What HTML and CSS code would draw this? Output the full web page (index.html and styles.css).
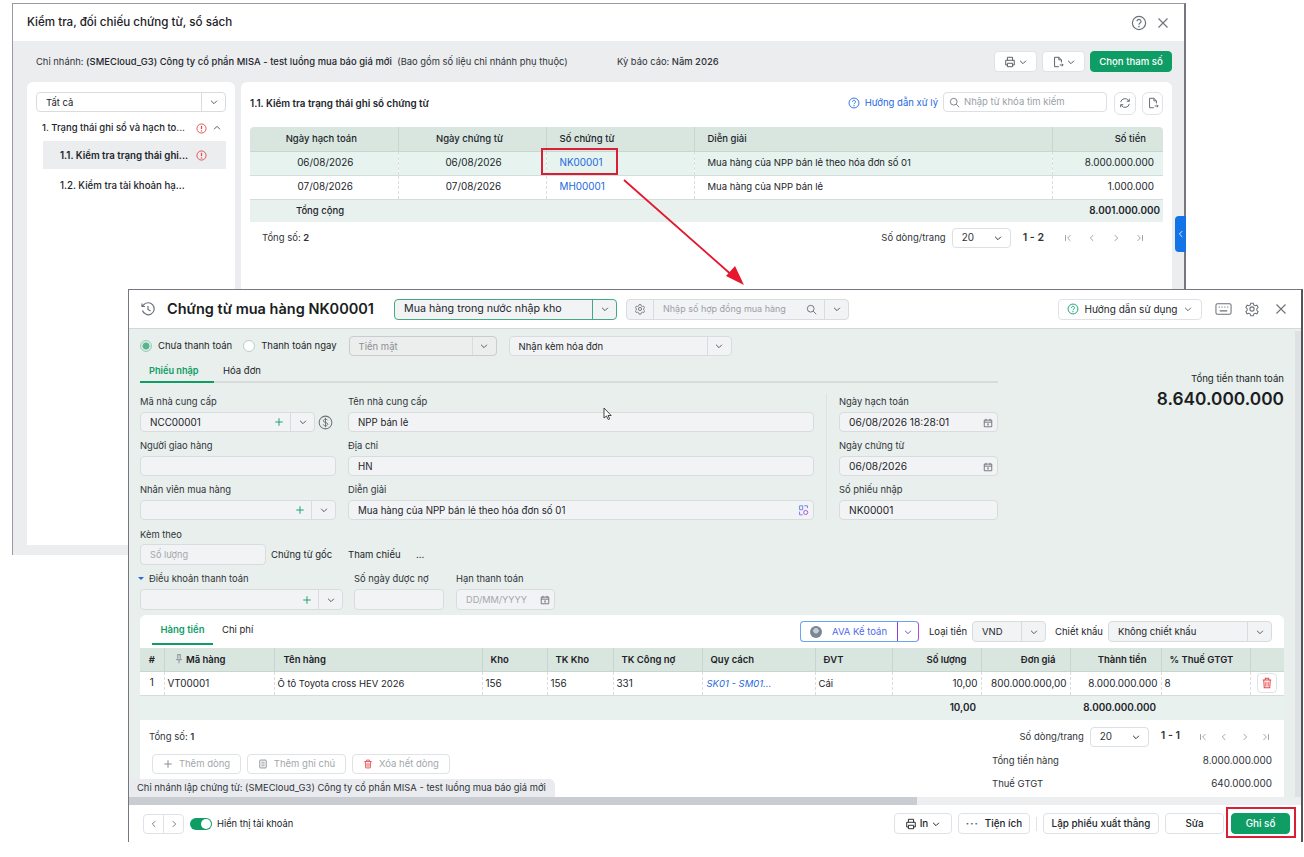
FILE: index.html
```html
<!DOCTYPE html>
<html lang="vi">
<head>
<meta charset="utf-8">
<title>Chứng từ mua hàng</title>
<link rel="stylesheet" href="styles.css">
</head>
<body>
<svg class="sprite" width="0" height="0">
  <symbol id="chev" viewBox="0 0 12 12"><path d="M2.500 4.500 6 8l3.500-3.500" fill="none" stroke="currentColor" stroke-width="1.200"/></symbol>
  <symbol id="help" viewBox="0 0 16 16"><circle cx="8" cy="8" r="6.600" fill="none" stroke="currentColor" stroke-width="1.200"/><path d="M6 6.300a2 2 0 1 1 3 1.800c-.7.4-1 .8-1 1.600" fill="none" stroke="currentColor" stroke-width="1.200"/><circle cx="8" cy="11.600" r=".8" fill="currentColor"/></symbol>
  <symbol id="close" viewBox="0 0 12 12"><path d="M1.500 1.500l9 9m0-9-9 9" fill="none" stroke="currentColor" stroke-width="1.100"/></symbol>
  <symbol id="print" viewBox="0 0 14 14"><path d="M4 5V1.500h6V5M4 10.500H2V5h10v5.500h-2M4 8.500h6v4H4z" fill="none" stroke="currentColor" stroke-width="1.100"/></symbol>
  <symbol id="export" viewBox="0 0 14 14"><path d="M8 12.500H3v-11h5l3 3v3M8 1.500v3h3M9 10.500h4m-1.500-1.500 1.500 1.500-1.500 1.500" fill="none" stroke="currentColor" stroke-width="1.100"/></symbol>
  <symbol id="warn" viewBox="0 0 12 12"><circle cx="6" cy="6" r="5" fill="none" stroke="currentColor" stroke-width="1"/><path d="M6 3v3.600" stroke="currentColor" stroke-width="1.300"/><circle cx="6" cy="8.600" r=".8" fill="currentColor"/></symbol>
  <symbol id="search" viewBox="0 0 14 14"><circle cx="6" cy="6" r="4.300" fill="none" stroke="currentColor" stroke-width="1.100"/><path d="M9.200 9.200 13 13" stroke="currentColor" stroke-width="1.100"/></symbol>
  <symbol id="refresh" viewBox="0 0 14 14"><path d="M2 6a5 5 0 0 1 9-2l1 1M12 8a5 5 0 0 1-9 2L2 9M12 2v3H9M2 12V9h3" fill="none" stroke="currentColor" stroke-width="1.100"/></symbol>
  <symbol id="first" viewBox="0 0 12 12"><path d="M3 2.500v7M9 2.500 5.500 6 9 9.500" fill="none" stroke="currentColor" stroke-width="1"/></symbol>
  <symbol id="prev" viewBox="0 0 12 12"><path d="M7.500 2.500 4 6l3.500 3.500" fill="none" stroke="currentColor" stroke-width="1"/></symbol>
  <symbol id="next" viewBox="0 0 12 12"><path d="M4.500 2.500 8 6 4.500 9.500" fill="none" stroke="currentColor" stroke-width="1"/></symbol>
  <symbol id="last" viewBox="0 0 12 12"><path d="M9 2.500v7M3 2.500 6.500 6 3 9.500" fill="none" stroke="currentColor" stroke-width="1"/></symbol>
  <symbol id="up" viewBox="0 0 12 12"><path d="M2.500 7.500 6 4l3.500 3.500" fill="none" stroke="currentColor" stroke-width="1.200"/></symbol>
  <symbol id="history" viewBox="0 0 16 16"><path d="M2.500 9.500A6 6 0 1 0 3.400 4.200L2 5.500M2 2.500v3h3M8 5v3.500l2.500 1.500" fill="none" stroke="currentColor" stroke-width="1.200"/></symbol>
  <symbol id="gear" viewBox="0 0 16 16"><path d="M6.500 1.500h3l.5 2 1.800 1 2-.6 1.400 2.600-1.500 1.500v2l1.500 1.400-1.400 2.600-2-.6-1.800 1-.5 2h-3l-.5-2-1.800-1-2 .6L.8 11.400l1.500-1.400v-2L.8 6.500l1.400-2.600 2 .6 1.800-1z" transform="translate(1.200 .9) scale(.85)" fill="none" stroke="currentColor" stroke-width="1.200"/><circle cx="8" cy="8" r="2.100" fill="none" stroke="currentColor" stroke-width="1.100"/></symbol>
  <symbol id="keyboard" viewBox="0 0 18 14"><rect x="1" y="1.500" width="16" height="11" rx="1.500" fill="none" stroke="currentColor" stroke-width="1.100"/><path d="M4 5h1m2 0h1m2 0h1m2 0h1M5 9h8" stroke="currentColor" stroke-width="1.100"/></symbol>
  <symbol id="plus" viewBox="0 0 12 12"><path d="M6 1.500v9m-4.500-4.500h9" stroke="currentColor" stroke-width="1.100" fill="none"/></symbol>
  <symbol id="dollar" viewBox="0 0 16 16"><circle cx="8" cy="8" r="6.800" fill="none" stroke="currentColor" stroke-width="1.100"/><path d="M10.300 5.700C10 4.800 9 4.500 8 4.500c-1.300 0-2.300.6-2.300 1.700 0 2.400 4.700 1.200 4.700 3.600 0 1.100-1 1.700-2.400 1.700-1.200 0-2.200-.4-2.500-1.400M8 3v10" fill="none" stroke="currentColor" stroke-width="1"/></symbol>
  <symbol id="cal" viewBox="0 0 12 12"><path d="M1.500 2.500h9v8h-9zM1.500 5h9M3.500 1v2.500M8.500 1v2.500" fill="none" stroke="currentColor" stroke-width="1.100"/><rect x="5.300" y="6.500" width="1.500" height="2.500" fill="currentColor"/></symbol>
  <symbol id="trash" viewBox="0 0 12 14"><path d="M1 3.500h10M4 3.500V1.500h4v2M2.200 3.500l.6 9h6.400l.6-9M4.700 5.500v5.500M7.300 5.500v5.500" fill="none" stroke="currentColor" stroke-width="1.200"/></symbol>
  <symbol id="note" viewBox="0 0 12 14"><rect x="1.500" y="1.500" width="9" height="11" rx="1" fill="none" stroke="currentColor" stroke-width="1.200"/><path d="M3.700 4.500h4.600M3.700 7h4.600M3.700 9.500h4.600" stroke="currentColor" stroke-width="1"/></symbol>
  <symbol id="pin" viewBox="0 0 10 14"><path d="M2.500 1h5M3.300 1v5L1.500 8h7L6.700 6V1M5 8v5" fill="none" stroke="currentColor" stroke-width="1"/></symbol>
  <symbol id="ai" viewBox="0 0 12 14"><path d="M5 1H1v5h4zM1 8.500v4h4M7 1h4v3" fill="none" stroke="#5b7be8" stroke-width="1.100"/><circle cx="8.800" cy="9.500" r="2.600" fill="none" stroke="#b04be0" stroke-width="1.200"/></symbol>
</svg>

<section class="window win-back">
  <header class="back-head">
    <h1 class="back-title">Kiểm tra, đối chiếu chứng từ, sổ sách</h1>
    <span class="head-icons">
      <svg class="ic16 c-grey"><use href="#help"/></svg>
      <svg class="ic12 c-grey"><use href="#close"/></svg>
    </span>
  </header>
  <div class="back-body">
    <div class="info-bar">
      <p class="info-branch">Chi nhánh: <b>(SMECloud_G3) Công ty cổ phần MISA - test luồng mua báo giá mới</b>&nbsp; (Bao gồm số liệu chi nhánh phụ thuộc)</p>
      <p class="info-period">Kỳ báo cáo: <b>Năm 2026</b></p>
      <span class="info-actions">
        <button class="btn btn-icon-drop"><svg class="ic12"><use href="#print"/></svg><svg class="ic10"><use href="#chev"/></svg></button>
        <button class="btn btn-icon-drop"><svg class="ic12"><use href="#export"/></svg><svg class="ic10"><use href="#chev"/></svg></button>
        <button class="btn btn-green btn-param">Chọn tham số</button>
      </span>
    </div>
    <div class="back-cols">
      <aside class="tree-card">
        <div class="combo tree-select"><span class="combo-text">Tất cả</span><span class="combo-drop"><svg class="ic10"><use href="#chev"/></svg></span></div>
        <div class="tree-row tree-l1"><span class="tree-label">1. Trạng thái ghi sổ và hạch to...</span><svg class="ic11 c-red"><use href="#warn"/></svg><svg class="ic10 tree-up"><use href="#up"/></svg></div>
        <div class="tree-row tree-l2 tree-active"><span class="tree-label">1.1. Kiểm tra trạng thái ghi...</span><svg class="ic11 c-red"><use href="#warn"/></svg></div>
        <div class="tree-row tree-l2 tree-last"><span class="tree-label">1.2. Kiểm tra tài khoản hạ...</span></div>
      </aside>
      <main class="report-card">
        <div class="report-head">
          <h2 class="report-title">1.1. Kiểm tra trạng thái ghi sổ chứng từ</h2>
          <a class="guide-link"><svg class="ic12"><use href="#help"/></svg>Hướng dẫn xử lý</a>
          <div class="search-box"><svg class="ic11 c-grey"><use href="#search"/></svg><span>Nhập từ khóa tìm kiếm</span></div>
          <button class="btn btn-square"><svg class="ic12"><use href="#refresh"/></svg></button>
          <button class="btn btn-square"><svg class="ic12"><use href="#export"/></svg></button>
        </div>
        <table class="grid grid-back">
          <colgroup><col class="b1"><col class="b1"><col class="b1"><col class="b2"><col class="b3"></colgroup>
          <thead><tr><th class="tc">Ngày hạch toán</th><th class="tc">Ngày chứng từ</th><th>Số chứng từ</th><th>Diễn giải</th><th class="tr th-money">Số tiền</th></tr></thead>
          <tbody>
            <tr class="row-sel"><td class="tc num">06/08/2026</td><td class="tc num">06/08/2026</td><td class="num"><a class="link">NK00001</a></td><td>Mua hàng của NPP bán lẻ theo hóa đơn số 01</td><td class="tr num">8.000.000.000</td></tr>
            <tr><td class="tc num">07/08/2026</td><td class="tc num">07/08/2026</td><td class="num"><a class="link">MH00001</a></td><td>Mua hàng của NPP bán lẻ</td><td class="tr num">1.000.000</td></tr>
          </tbody>
          <tfoot><tr><td class="tc total-label">Tổng cộng</td><td></td><td></td><td></td><td class="tr total-money num">8.001.000.000</td></tr></tfoot>
        </table>
        <div class="pager pager-back">
          <span class="count">Tổng số: <b>2</b></span>
          <span class="pager-right">
            <span>Số dòng/trang</span>
            <span class="page-size"><span>20</span><svg class="ic10"><use href="#chev"/></svg></span>
            <b class="page-range">1 - 2</b>
            <span class="page-nav"><svg class="ic10"><use href="#first"/></svg><svg class="ic10"><use href="#prev"/></svg><svg class="ic10"><use href="#next"/></svg><svg class="ic10"><use href="#last"/></svg></span>
          </span>
        </div>
      </main>
    </div>
  </div>
  <span class="side-tab"><svg class="ic10"><use href="#prev"/></svg></span>
</section>

<svg class="arrow" width="140" height="120" viewBox="0 0 140 120"><path d="M2 1 112 98" stroke="#e5162d" stroke-width="1.800" fill="none"/><path d="M122 106 104 97 113 87z" fill="#e5162d"/></svg>

<section class="window win-front">
  <header class="front-head">
    <svg class="ic16 c-grey hist"><use href="#history"/></svg>
    <h1 class="front-title">Chứng từ mua hàng NK00001</h1>
    <div class="combo combo-green"><span class="combo-text">Mua hàng trong nước nhập kho</span><span class="combo-drop"><svg class="ic10"><use href="#chev"/></svg></span></div>
    <div class="combo contract"><span class="contract-gear"><svg class="ic12"><use href="#gear"/></svg></span><span class="combo-text contract-text">Nhập số hợp đồng mua hàng</span><svg class="ic11 contract-search"><use href="#search"/></svg><span class="combo-drop"><svg class="ic10"><use href="#chev"/></svg></span></div>
    <span class="spacer"></span>
    <button class="btn guide-btn"><svg class="ic12 c-green"><use href="#help"/></svg><span>Hướng dẫn sử dụng</span><svg class="ic10"><use href="#chev"/></svg></button>
    <svg class="kbd c-grey"><use href="#keyboard"/></svg>
    <svg class="ic16 c-grey"><use href="#gear"/></svg>
    <svg class="ic12 c-grey"><use href="#close"/></svg>
  </header>

  <div class="front-body">
    <div class="upper">
      <div class="upper-left">
        <div class="pay-row">
          <label class="radio radio-on"><i></i>Chưa thanh toán</label>
          <label class="radio"><i></i>Thanh toán ngay</label>
          <div class="combo combo-dis cash"><span class="combo-text">Tiền mặt</span><span class="combo-drop"><svg class="ic10"><use href="#chev"/></svg></span></div>
          <div class="combo invoice"><span class="combo-text">Nhận kèm hóa đơn</span><span class="combo-drop"><svg class="ic10"><use href="#chev"/></svg></span></div>
        </div>
        <nav class="tabs form-tabs"><a class="tab tab-on">Phiếu nhập</a><a class="tab">Hóa đơn</a></nav>
        <div class="form-grid">
          <div class="fcol col-a">
            <div class="field"><span class="lbl">Mã nhà cung cấp</span>
              <div class="with-side"><div class="combo combo-ncc"><span class="combo-text num">NCC00001</span><svg class="ic10 c-green add"><use href="#plus"/></svg><span class="combo-drop"><svg class="ic10"><use href="#chev"/></svg></span></div><svg class="ic14 c-grey"><use href="#dollar"/></svg></div>
            </div>
            <div class="field"><span class="lbl">Người giao hàng</span><div class="input"></div></div>
            <div class="field"><span class="lbl">Nhân viên mua hàng</span><div class="combo"><span class="combo-text"></span><svg class="ic10 c-green add"><use href="#plus"/></svg><span class="combo-drop"><svg class="ic10"><use href="#chev"/></svg></span></div></div>
          </div>
          <div class="fcol col-b">
            <div class="field"><span class="lbl">Tên nhà cung cấp</span><div class="input">NPP bán lẻ</div></div>
            <div class="field"><span class="lbl">Địa chỉ</span><div class="input">HN</div></div>
            <div class="field"><span class="lbl">Diễn giải</span><div class="input input-between"><span>Mua hàng của NPP bán lẻ theo hóa đơn số 01</span><svg class="ic11"><use href="#ai"/></svg></div></div>
          </div>
          <div class="fcol col-c">
            <div class="field"><span class="lbl">Ngày hạch toán</span><div class="input input-between num"><span>06/08/2026 18:28:01</span><svg class="ic10 c-grey"><use href="#cal"/></svg></div></div>
            <div class="field"><span class="lbl">Ngày chứng từ</span><div class="input input-between num"><span>06/08/2026</span><svg class="ic10 c-grey"><use href="#cal"/></svg></div></div>
            <div class="field"><span class="lbl">Số phiếu nhập</span><div class="input num">NK00001</div></div>
          </div>
        </div>
        <div class="attach">
          <span class="lbl">Kèm theo</span>
          <div class="attach-row">
            <div class="input input-ph qty">Số lượng</div>
            <span class="attach-text">Chứng từ gốc</span>
            <span class="attach-ref">Tham chiếu</span>
            <span class="attach-dots">...</span>
          </div>
        </div>
        <div class="terms">
          <div class="field f-term"><span class="lbl"><i class="caret"></i>Điều khoản thanh toán</span><div class="combo"><span class="combo-text"></span><svg class="ic10 c-green add"><use href="#plus"/></svg><span class="combo-drop"><svg class="ic10"><use href="#chev"/></svg></span></div></div>
          <div class="field f-days"><span class="lbl">Số ngày được nợ</span><div class="input"></div></div>
          <div class="field f-due"><span class="lbl">Hạn thanh toán</span><div class="input input-between input-ph"><span>DD/MM/YYYY</span><svg class="ic10 c-grey"><use href="#cal"/></svg></div></div>
        </div>
      </div>
      <div class="upper-right">
        <div class="sum-label">Tổng tiền thanh toán</div>
        <div class="sum-value">8.640.000.000</div>
      </div>
    </div>

    <div class="items-card">
      <div class="items-bar">
        <nav class="tabs item-tabs"><a class="tab tab-on">Hàng tiền</a><a class="tab">Chi phí</a></nav>
        <span class="spacer"></span>
        <div class="ava"><span class="ava-main"><i class="ava-dot"></i><span>AVA Kế toán</span></span><span class="ava-drop"><svg class="ic10"><use href="#chev"/></svg></span></div>
        <span class="bar-label">Loại tiền</span>
        <div class="combo vnd"><span class="combo-text">VND</span><span class="combo-drop"><svg class="ic10"><use href="#chev"/></svg></span></div>
        <span class="bar-label">Chiết khấu</span>
        <div class="combo discount"><span class="combo-text">Không chiết khấu</span><span class="combo-drop"><svg class="ic10"><use href="#chev"/></svg></span></div>
      </div>
      <table class="grid grid-front">
        <colgroup><col class="f1"><col class="f2"><col class="f3"><col class="f4"><col class="f5"><col class="f6"><col class="f7"><col class="f8"><col class="f9"><col class="f9"><col class="f10"><col class="f9"><col class="f11"></colgroup>
        <thead><tr><th class="tc">#</th><th class="th-pin"><svg class="ic10 c-grey"><use href="#pin"/></svg> Mã hàng</th><th class="pl9">Tên hàng</th><th>Kho</th><th>TK Kho</th><th>TK Công nợ</th><th>Quy cách</th><th class="pl8">ĐVT</th><th class="tr th-r">Số lượng</th><th class="tr th-r">Đơn giá</th><th class="tr th-r">Thành tiền</th><th class="pl8">% Thuế GTGT</th><th></th></tr></thead>
        <tbody><tr><td class="tc num">1</td><td class="num">VT00001</td><td class="pl3">Ô tô Toyota cross HEV 2026</td><td class="num">156</td><td class="num">156</td><td class="num">331</td><td class="spec">SK01 - SM01...</td><td>Cái</td><td class="tr num">10,00</td><td class="tr num">800.000.000,00</td><td class="tr num">8.000.000.000</td><td class="num">8</td><td class="tc"><span class="del"><svg class="ic12 c-red"><use href="#trash"/></svg></span></td></tr></tbody>
        <tfoot><tr><td></td><td></td><td></td><td></td><td></td><td></td><td></td><td></td><td class="tr total-money num">10,00</td><td></td><td class="tr total-money num">8.000.000.000</td><td></td><td></td></tr></tfoot>
      </table>
      <div class="items-foot">
        <div class="foot-left">
          <span class="count">Tổng số: <b>1</b></span>
          <div class="row-btns">
            <button class="btn btn-dis w-add"><svg class="ic10"><use href="#plus"/></svg>Thêm dòng</button>
            <button class="btn btn-dis w-note"><svg class="ic10"><use href="#note"/></svg>Thêm ghi chú</button>
            <button class="btn btn-dis w-del"><svg class="ic10 c-red"><use href="#trash"/></svg>Xóa hết dòng</button>
          </div>
        </div>
        <div class="foot-right">
          <span class="pager-right">
            <span>Số dòng/trang</span>
            <span class="page-size"><span>20</span><svg class="ic10"><use href="#chev"/></svg></span>
            <b class="page-range">1 - 1</b>
            <span class="page-nav"><svg class="ic10"><use href="#first"/></svg><svg class="ic10"><use href="#prev"/></svg><svg class="ic10"><use href="#next"/></svg><svg class="ic10"><use href="#last"/></svg></span>
          </span>
          <div class="sum-line"><span>Tổng tiền hàng</span><span class="num">8.000.000.000</span></div>
          <div class="sum-line"><span>Thuế GTGT</span><span class="num">640.000.000</span></div>
        </div>
      </div>
    </div>
    <div class="branch-chip">Chi nhánh lập chứng từ: (SMECloud_G3) Công ty cổ phần MISA - test luồng mua báo giá mới</div>
    <div class="h-scroll"></div>
    <div class="v-scroll"></div>
  </div>

  <footer class="front-foot">
    <span class="nav-pair"><span><svg class="ic10"><use href="#prev"/></svg></span><span><svg class="ic10"><use href="#next"/></svg></span></span>
    <span class="toggle"><i></i></span>
    <span class="toggle-label">Hiển thị tài khoản</span>
    <span class="spacer"></span>
    <button class="btn foot-btn w-in"><svg class="ic12"><use href="#print"/></svg>In<svg class="ic10"><use href="#chev"/></svg></button>
    <button class="btn foot-btn w-util"><span class="dots">···</span>Tiện ích</button>
    <span class="foot-sep"></span>
    <button class="btn foot-btn w-lap">Lập phiếu xuất thẳng</button>
    <button class="btn foot-btn w-sua">Sửa</button>
    <button class="btn btn-green foot-btn w-ghi">Ghi số</button>
  </footer>
</section>

<span class="callout callout-link"></span>
<span class="callout callout-save"></span>
<svg class="cursor" width="10" height="14" viewBox="0 0 10 14"><path d="M1 1v10l2.500-2 1.700 3.500 1.500-.7L5 8.500h3.200z" fill="#fff" stroke="#333" stroke-width=".9"/></svg>
</body>
</html>
```
FILE: styles.css
```css
* { box-sizing: border-box; }
html, body { margin: 0; height: 857px; overflow: hidden; background: #fff; }
body { position: relative; font: 9.5px/1.2 Inter, "Liberation Sans", sans-serif; color: #22252b; }
h1, h2, p { margin: 0; }
b { font-weight: 600; }
i { font-style: normal; }
button { font: inherit; color: inherit; }
.sprite { position: absolute; }
svg { flex: none; display: block; }
.ic10 { width: 10px; height: 10px; }
.ic11 { width: 11px; height: 11px; }
.ic12 { width: 12px; height: 12px; }
.ic14 { width: 15px; height: 15px; }
.ic16 { width: 16px; height: 16px; }
.c-grey { color: #6c7178; }
.c-red { color: #e5484d; }
.c-green { color: #0f9d66; }
.spacer { flex: 1; }
.tc { text-align: center; }
.tr { text-align: right; }
.num { font-size: 9.9px; }

/* windows */
.window { position: absolute; background: #fff; display: flex; flex-direction: column; }
.win-back { left: 12px; top: 3px; width: 1174px; height: 552px; border: 1px solid #9a98a2; border-right: 2px solid #77767f; border-bottom: 0; }
.win-front { left: 128px; top: 289px; width: 1175px; height: 553px; border: 1px solid #77757f; border-right: 2px solid #55545c; border-bottom: 0; overflow: hidden; }

/* back window */
.back-head { height: 37px; flex: none; display: flex; align-items: center; padding: 0 15px 0 14px; }
.back-title { flex: 1; font-size: 11.6px; font-weight: 500; color: #1d2026; }
.head-icons { display: flex; align-items: center; gap: 10px; }
.back-body { flex: 1; background: #ebedef; display: flex; flex-direction: column; min-height: 0; }
.info-bar { height: 41px; flex: none; display: flex; align-items: center; padding: 0 12px 0 23px; font-size: 9.4px; }
.info-branch { width: 581px; color: #30343a; white-space: nowrap; }
.info-branch b { font-weight: 500; color: #22252b; letter-spacing: .05px; }
.info-period { flex: 1; color: #30343a; }
.info-period b { font-weight: 500; }
.info-actions { display: flex; gap: 5px; }
.btn { display: inline-flex; align-items: center; justify-content: center; border: 1px solid #dfe2e6; border-radius: 4px; background: #fff; padding: 0; height: 21px; }
.btn-icon-drop { width: 43px; gap: 2px; color: #555a61; }
.btn-green { background: #0f9d66; border-color: #0f9d66; color: #fff; font-weight: 500; }
.btn-param { width: 82px; font-size: 9.6px; }
.back-cols { flex: 1; display: flex; gap: 6px; padding: 0 12px 10px 14px; min-height: 0; }
.tree-card { width: 208px; flex: none; background: #fff; border-radius: 6px 6px 0 0; padding: 10px 9px 0; }
.tree-select { height: 20px; }
.tree-row { display: flex; align-items: center; height: 28px; font-weight: 500; white-space: nowrap; padding-top: 1px; }
.tree-l1 { margin-top: 2px; padding-left: 6px; height: 27px; }
.tree-l1 .tree-label { width: 154px; }
.tree-up { margin-left: 5px; color: #555a61; }
.tree-l2 { margin-left: 7px; padding-left: 17px; font-size: 9.7px; }
.tree-l2 .tree-label { width: 136px; }
.tree-active { background: #ebedef; height: 28px; font-weight: 600; }
.tree-last { margin-top: 1px; height: 30px; }
.report-card { flex: 1; min-width: 0; background: #fff; border-radius: 6px 6px 0 0; padding: 10px 9px 0; }
.report-head { display: flex; align-items: center; height: 22px; gap: 6px; }
.report-title { flex: 1; font-size: 9.8px; font-weight: 600; padding-top: 1px; }
.guide-link { display: flex; align-items: center; gap: 5px; color: #2469e0; margin-right: -1px; }
.search-box { width: 164px; height: 20px; margin: 0 1px 2px 0; border: 1px solid #dcdfe3; border-radius: 4px; display: flex; align-items: center; gap: 4px; padding: 0 5px; color: #9a9fa6; }
.btn-square { width: 22px; height: 23px; border-radius: 6px; color: #60656c; }
.btn-square:last-child { width: 21px; }

/* shared data grid */
.grid { width: 100%; border-collapse: collapse; table-layout: fixed; }
.grid th { background: #d9e6e0; font-weight: 600; text-align: left; height: 24px; padding: 0 8px; border-left: 1px solid #c6d5ce; border-bottom: 1px solid #c9d6d0; white-space: nowrap; }
.grid th:first-child { border-left: 0; }
.grid th.tc { text-align: center; }
.grid th.tr { text-align: right; }
.grid td { height: 24px; padding: 0 8px; border-left: 1px dashed #d9dde0; border-bottom: 1px solid #d6dbdd; white-space: nowrap; overflow: hidden; }
.grid td:first-child { border-left: 0; }
.grid tfoot td { background: #e9f1ee; border: 0; height: 23px; }
.total-money { font-weight: 600; }
.row-sel td { background: #e6f3ee; }
.link { color: #2469e0; }

.grid-back { margin-top: 13px; }
.grid-back th { font-weight: 500; padding: 0 13px; }
.grid-back th.tc { padding: 0 18px 0 13px; }
.grid-back td { padding: 0 13px; }
.grid-back td.tc { padding: 0 13px 0 16px; }
.grid-back td.tr { padding-right: 9px; }
.grid-back thead th:first-child { border-radius: 4px 0 0 0; }
.grid-back thead th:last-child { border-radius: 0 4px 0 0; }
.b1 { width: 148px; }
.b2 { width: 358px; }
.b3 { width: 111px; }
.th-money { padding-right: 17px !important; }
.grid-back td.total-label { font-weight: 500; padding: 0 8px 0 0; }
.grid-back tfoot .total-money { padding-right: 3px; }

.pager { display: flex; justify-content: space-between; align-items: center; }
.pager-back { height: 32px; padding: 0 18px 0 12px; }
.count { color: #30343a; }
.pager-right { display: inline-flex; align-items: center; color: #30343a; white-space: nowrap; }
.page-size { width: 59px; height: 20px; margin-left: 6px; border: 1px solid #dcdfe3; border-radius: 4px; display: inline-flex; align-items: center; justify-content: space-between; padding: 0 7px 0 9px; font-size: 9.9px; }
.page-range { margin-left: 12px; font-size: 10.6px; }
.page-nav { display: inline-flex; gap: 14px; margin-left: 19px; color: #8c9197; }
.side-tab { position: absolute; right: -2px; top: 212px; width: 11px; height: 36px; background: #1274e6; color: #fff; border-radius: 4px 0 0 4px; display: flex; align-items: center; justify-content: center; }

/* combos and inputs */
.combo { display: flex; align-items: center; height: 20px; border: 1px solid #d8dcdf; border-radius: 4px; background: #f2f3f4; }
.combo-text { flex: 1; padding: 1px 0 0 9px; white-space: nowrap; overflow: hidden; }
.combo-drop { width: 24px; height: 100%; border-left: 1px solid #d8dcdf; display: flex; align-items: center; justify-content: center; color: #555a61; }
.tree-select { background: #fff; }
.add { margin-right: 6px; }
.input { height: 20px; border: 1px solid #d8dcdf; border-radius: 4px; background: #f2f3f4; display: flex; align-items: center; padding: 1px 9px 0; font-size: 9.7px; }
.input.num { font-size: 10.2px; }
.input-between { justify-content: space-between; padding-right: 4px; }
.input-ph { color: #a3a7ac; font-size: 9.2px; }

/* front window */
.front-head { height: 39px; flex: none; display: flex; align-items: center; padding: 0 14px 0 11px; border-bottom: 1px solid #d4d8da; }
.front-head > .hist { margin-right: 11px; }
.front-title { width: 227px; font-size: 14.5px; font-weight: 600; color: #1a1d22; white-space: nowrap; }
.combo-green { width: 223px; border-color: #45a883; height: 21px; font-size: 10.7px; }
.combo-green .combo-drop { border-color: #45a883; }
.contract { width: 223px; height: 21px; margin-left: 9px; color: #9a9fa6; }
.contract-gear { width: 27px; height: 100%; display: flex; align-items: center; justify-content: center; border-right: 1px solid #d8dcdf; color: #60656c; }
.contract-text { font-size: 9px; }
.contract-search { margin-right: 7px; color: #60656c; }
.guide-btn { width: 144px; height: 21px; gap: 6px; margin-right: 13px; font-size: 10px; }
.guide-btn > .ic10 { color: #60656c; }
.kbd { width: 17px; height: 14px; margin-right: 12px; }
.front-head > .ic16 { margin-right: 15px; }
.front-head > .hist { margin-right: 11px; }
.front-body { flex: 1; position: relative; background: #e8efec; padding: 6px 17px 0 11px; min-height: 0; }
.upper { display: flex; }
.upper-left { width: 858px; flex: none; }
.upper-right { flex: 1; text-align: right; padding-top: 38px; }
.sum-label { font-size: 9.6px; }
.sum-value { margin-top: 4px; font-size: 17.3px; font-weight: 600; color: #1a1d22; }
.pay-row { display: flex; align-items: center; height: 21px; padding-top: 1px; }
.radio { display: inline-flex; align-items: center; gap: 6px; margin-right: 11px; white-space: nowrap; }
.radio i { width: 12px; height: 12px; border-radius: 50%; border: 1px solid #bcd0c8; background: #fff; display: block; }
.radio-on i { background: radial-gradient(circle, #58b48f 0 3.200px, #d7ebe2 3.800px); border-color: #9ccbb8; }
.cash { width: 148px; margin-left: 1px; }
.combo-dis { background: #eceded; color: #8a8f95; border-color: #c9ccd0; }
.invoice { width: 223px; margin-left: 12px; }
.tabs { display: flex; }
.tab { display: block; white-space: nowrap; }
.form-tabs { height: 27px; border-bottom: 2px solid #d7dcda; }
.form-tabs .tab { padding: 7px 9px 0; height: 27px; width: 74px; line-height: 15px; }
.form-tabs .tab-on { font-size: 9.2px; }
.form-tabs .tab + .tab { width: auto; }
.tab-on { color: #0f9d66; font-weight: 600; border-bottom: 2px solid #0f9d66; }
.form-grid { display: grid; grid-template-columns: 196px 466px 172px; column-gap: 12px; margin-top: 5px; }
.fcol { min-width: 0; }
.col-c { position: relative; padding-left: 13px; }
.col-c::before { content: ""; position: absolute; left: 0; top: 6px; bottom: 0; width: 1px; background: #dde3e0; }
.lbl { display: block; height: 24px; line-height: 28px; color: #30343a; white-space: nowrap; font-size: 9.4px; }
.with-side { display: flex; align-items: center; gap: 3px; }
.combo-ncc { width: 175px; }
.attach .lbl { line-height: 30px; }
.attach-row { display: flex; align-items: center; height: 21px; }
.qty { width: 126px; height: 21px; }
.attach-text { margin-left: 5px; width: 77px; white-space: nowrap; padding-top: 1px; }
.attach-ref { width: 68px; white-space: nowrap; padding-top: 1px; }
.attach-dots { color: #30343a; }
.terms { display: flex; gap: 11px; }
.lbl .caret { display: inline-block; width: 0; height: 0; border: 3px solid transparent; border-top-color: #2469e0; border-bottom: 0; vertical-align: 2px; margin: 0 5px 0 -2px; }
.f-term { width: 203px; }
.f-days { width: 90px; }
.f-due { width: 99px; margin-left: 1px; }
.f-term .combo, .f-days .input, .f-due .input { height: 21px; }

.items-card { position: relative; background: #fff; border-radius: 6px 6px 0 0; margin-top: 5px; height: 183px; overflow: hidden; }
.items-bar { display: flex; align-items: center; height: 33px; padding-right: 12px; }
.item-tabs { margin-left: 12px; height: 33px; }
.item-tabs .tab { padding-top: 9px; height: 30px; line-height: 12px; text-align: center; }
.item-tabs .tab-on { width: 61px; }
.item-tabs .tab + .tab { margin-left: 9px; }
.ava { width: 119px; height: 21px; display: flex; border: 1px solid #6aa5ee; border-right-color: #b04be0; border-radius: 4px; color: #4f6be8; margin-right: 10px; white-space: nowrap; }
.ava-main { flex: 1; display: flex; align-items: center; padding-left: 9px; gap: 10px; border-right: 1px solid #8a3fd8; }
.ava-dot { width: 12px; height: 12px; border-radius: 50%; background: radial-gradient(circle at 50% 40%, #c5ccd6 0 2.500px, #7c8795 3px 6px); }
.ava-drop { width: 20px; display: flex; align-items: center; justify-content: center; color: #6a4fe0; }
.bar-label { margin-right: 5px; white-space: nowrap; }
.vnd { width: 74px; margin-right: 9px; height: 21px; }
.discount { width: 164px; height: 21px; }

.grid-front th { height: 23px; padding: 0 8px; font-weight: 600; color: #1e2126; }
.grid-front th.th-r { padding-right: 14px; }
.grid-front td { height: 24px; padding: 1px 3px 0; }
.grid-front tfoot td { height: 25px; }
.grid-front td.tc { padding: 0; }
.f1 { width: 24px; } .f2 { width: 110px; } .f3 { width: 208px; } .f4 { width: 65px; } .f5 { width: 66px; } .f6 { width: 89px; } .f7 { width: 113px; } .f8 { width: 77px; } .f9 { width: 89px; } .f10 { width: 91px; } .f11 { width: 34px; }
.th-pin svg { display: inline-block; vertical-align: -1px; }
.th-pin { padding-left: 9px !important; }
.pl3 { padding-left: 3px !important; }
.pl8 { padding-left: 8px !important; }
.pl9 { padding-left: 9px !important; }
.spec { color: #2469e0; font-style: italic; }
.grid-front tbody td:nth-child(7) { padding-left: 4px; }
.del { display: inline-flex; width: 20px; height: 20px; align-items: center; justify-content: center; border: 1px solid #dfe2e6; border-radius: 4px; vertical-align: middle; }
.grid-front tfoot .total-money { padding-right: 5px; }

.items-foot { display: flex; justify-content: space-between; }
.foot-left { padding: 11px 0 0 9px; }
.foot-left .count { display: block; height: 23px; line-height: 12px; }
.row-btns { display: flex; gap: 6px; padding-left: 3px; }
.btn-dis { gap: 6px; color: #a3a7ac; height: 20px; }
.btn-dis > svg { color: #7d8288; }
.btn-dis > svg.c-red { color: #e5484d; }
.w-add { width: 89px; } .w-note { width: 99px; } .w-del { width: 98px; }
.foot-right { width: 280px; margin-right: 12px; padding-top: 6px; }
.foot-right .pager-right { width: 100%; justify-content: flex-end; height: 21px; }
.foot-right .page-nav { margin: 0 1px 0 18px; gap: 11px; }
.sum-line { display: flex; justify-content: space-between; height: 23px; align-items: center; color: #30343a; }
.foot-right .sum-line:nth-child(2) { margin-top: 2px; }
.branch-chip { position: absolute; left: 1px; top: 450px; width: 425px; height: 18px; background: #e9ebee; border-radius: 0 6px 0 0; display: flex; align-items: center; padding-left: 7px; color: #30343a; font-size: 9.4px; white-space: nowrap; }
.h-scroll { position: absolute; left: 0; right: 0; top: 468px; height: 8px; background: linear-gradient(90deg, #c9cdd2 0 788px, #eceef0 788px); border-radius: 0 4px 4px 0; }
.v-scroll { position: absolute; right: 0; top: 2px; bottom: 8px; width: 6px; background: #dfe2e3; }

.front-foot { height: 37px; flex: none; display: flex; align-items: center; padding: 0 11px 0 14px; background: #fff; }
.nav-pair { display: flex; width: 41px; height: 20px; border: 1px solid #dfe2e6; border-radius: 4px; color: #60656c; }
.nav-pair span { flex: 1; display: flex; align-items: center; justify-content: center; }
.nav-pair span + span { border-left: 1px solid #dfe2e6; }
.toggle { width: 22px; height: 12px; margin-left: 6px; border-radius: 6px; background: #0f9d66; display: flex; justify-content: flex-end; align-items: center; padding-right: 1px; }
.toggle i { width: 10px; height: 10px; background: #fff; border-radius: 50%; }
.toggle-label { margin-left: 5px; font-size: 9.3px; }
.foot-btn { height: 21px; margin-left: 6px; font-weight: 500; gap: 4px; font-size: 9.9px; white-space: nowrap; }
.w-in { width: 58px; gap: 3px; }
.w-util { width: 72px; gap: 6px; }
.dots { letter-spacing: 1px; font-weight: 700; color: #555; }
.foot-sep { width: 1px; height: 14px; background: #dfe2e6; margin-left: 6px; }
.w-lap { width: 116px; }
.w-sua { width: 59px; }
.w-ghi { width: 59px; margin-left: 7px; }

/* annotations laid over the screenshot */
.arrow { position: absolute; left: 622px; top: 179px; pointer-events: none; }
.callout { position: absolute; border: 2px solid #d81f35; pointer-events: none; }
.callout-link { left: 541px; top: 148px; width: 77px; height: 27px; }
.callout-save { left: 1226px; top: 807px; width: 70px; height: 31px; }
.cursor { position: absolute; left: 603px; top: 407px; }
```
